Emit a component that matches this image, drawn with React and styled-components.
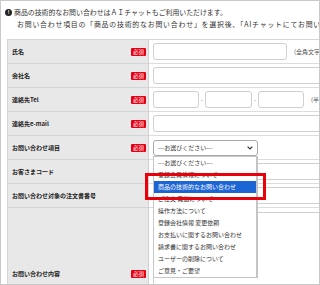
import React from 'react';
import styled, { createGlobalStyle } from 'styled-components';

const GlobalStyle = createGlobalStyle`
  html, body { margin: 0; padding: 0; background: #fff; }
  body { font-family: "Noto Sans CJK JP", "Noto Sans", sans-serif; color: #333; }
  * { box-sizing: border-box; }
`;

const options = [
  '---お選びください---',
  '登録会員情報について',
  '商品の技術的なお問い合わせ',
  'ご注文 発送について',
  '操作方法について',
  '登録会社情報 変更依頼',
  'お支払いに関するお問い合わせ',
  '請求書に関するお問い合わせ',
  'ユーザーの削除について',
  'ご意見・ご要望',
];

const App = () => {
  return (
    <Frame>
      <GlobalStyle />
      <Notice>
        <div className='line'>
          <InfoIcon>!</InfoIcon>
          商品の技術的なお問い合わせはＡＩチャットもご利用いただけます。
        </div>
        <div className='line sub'>
          お問い合わせ項目の「商品の技術的なお問い合わせ」を選択後、「AIチャットにてお問い合わせ」ボタンを押してください。
        </div>
      </Notice>

      <FormTable>
        <Row>
          <Label>氏名<Required>必須</Required></Label>
          <Field>
            <TextInput $w={134} />
            <Note>(全角文字)</Note>
          </Field>
        </Row>
        <Row>
          <Label>会社名<Required>必須</Required></Label>
          <Field>
            <TextInput $w={300} />
          </Field>
        </Row>
        <Row>
          <Label>連絡先Tel<Required>必須</Required></Label>
          <Field>
            <TextInput $w={46} />
            <Dash>-</Dash>
            <TextInput $w={47} />
            <Dash>-</Dash>
            <TextInput $w={46} />
            <Note>(半角数字)</Note>
          </Field>
        </Row>
        <Row>
          <Label>連絡先e-mail<Required>必須</Required></Label>
          <Field>
            <TextInput $w={300} />
          </Field>
        </Row>
        <Row>
          <Label>お問い合わせ項目<Required>必須</Required></Label>
          <Field>
            <SelectWrap>
              <SelectBox>
                <span>---お選びください---</span>
                <svg width="6" height="4" viewBox="0 0 6 4">
                  <path d="M0.6 0.6 L3 3 L5.4 0.6" fill="none" stroke="#333" strokeWidth="1.2" />
                </svg>
              </SelectBox>
              <OptionList>
                {options.map((o, i) => (
                  <OptionItem key={o} $active={i === 2}>{o}</OptionItem>
                ))}
              </OptionList>
              <Highlight />
            </SelectWrap>
          </Field>
        </Row>
        <Row>
          <Label>お客さまコード</Label>
          <Field>
            <TextInput $w={300} />
          </Field>
        </Row>
        <Row>
          <Label>お問い合わせ対象の注文書番号</Label>
          <Field>
            <TextInput $w={300} />
          </Field>
        </Row>
        <Row $tall>
          <Label $bottom>お問い合わせ内容<Required>必須</Required></Label>
          <Field $top>
            <TextArea />
          </Field>
        </Row>
      </FormTable>
    </Frame>
  );
};

const Frame = styled.div`
  width: 320px;
  height: 285px;
  border: 1px solid #c9c9c9;
  overflow: hidden;
  position: relative;
  padding: 5px 0 0 6px;
`;

const Notice = styled.div`
  font-size: 6.9px;
  line-height: 12px;
  color: #333;
  white-space: nowrap;
  height: 33px;
  .line{
    display: flex;
    align-items: center;
  }
  .sub{
    padding-left: 10px;
    font-size: 6.9px;
    letter-spacing: 0.8px;
  }
`;

const InfoIcon = styled.span`
  display: inline-flex;
  align-items: center;
  justify-content: center;
  width: 7px;
  height: 7px;
  border-radius: 50%;
  background: #222;
  color: #fff;
  font-size: 5px;
  font-weight: 700;
  margin: 0 2px 0 -2px;
  font-family: "Liberation Sans", sans-serif;
`;

const FormTable = styled.div`
  width: 420px;
  border-top: 1px solid #d6d6d6;
  border-left: 1px solid #d6d6d6;
`;

const Row = styled.div`
  display: grid;
  grid-template-columns: 141px 1fr;
  height: ${p => p.$tall ? '90px' : '24px'};
`;

const Label = styled.div`
  background: #e8e8e8;
  border-bottom: 1px solid #d4d4d4;
  border-right: 1px solid #d0d0d0;
  display: flex;
  align-items: ${p => p.$bottom ? 'flex-end' : 'center'};
  padding: ${p => p.$bottom ? '0 2px 19px 4px' : '0 2px 0 4px'};
  font-size: 6px;
  font-weight: 700;
  color: #222;
  white-space: nowrap;
`;

const Required = styled.span`
  margin-left: auto;
  background: #e60012;
  color: #fff;
  font-size: 5.5px;
  font-weight: 400;
  line-height: 8px;
  padding: 0 1px;
  width: 15px;
  text-align: center;
  border-radius: 1px;
`;

const Field = styled.div`
  background: #fff;
  border-bottom: 1px solid #dcdcdc;
  display: flex;
  align-items: ${p => p.$top ? 'flex-start' : 'center'};
  padding: ${p => p.$top ? '4px 0 0 4px' : '0 0 0 4px'};
  font-size: 6px;
  color: #555;
  white-space: nowrap;
`;

const TextInput = styled.div`
  width: ${p => p.$w}px;
  flex-shrink: 0;
  height: 17px;
  border: 1px solid #cfcfcf;
  border-radius: 3px;
  background: #fff;
`;

const Note = styled.span`
  margin-left: 7px;
  color: #555;
`;

const Dash = styled.span`
  width: 6px;
  text-align: center;
  color: #777;
`;

const SelectWrap = styled.div`
  position: relative;
`;

const SelectBox = styled.div`
  width: 105px;
  height: 16px;
  border: 1px solid #a9a9a9;
  border-radius: 3px;
  display: flex;
  align-items: center;
  justify-content: space-between;
  padding: 0 4px;
  font-size: 6px;
  color: #333;
`;

const OptionList = styled.div`
  position: absolute;
  top: 16px;
  left: 0;
  width: 105px;
  background: #fff;
  border: 1px solid #c8c8c8;
  border-right: 2px solid #c4c4c4;
  z-index: 2;
`;

const OptionItem = styled.div`
  height: 12px;
  line-height: 12px;
  padding-left: 4px;
  font-size: 6px;
  color: ${p => p.$active ? '#fff' : '#333'};
  background: ${p => p.$active ? '#1c65d4' : 'transparent'};
`;

const Highlight = styled.div`
  position: absolute;
  top: 33px;
  left: -8px;
  width: 121px;
  height: 27px;
  border: 3px solid #e8000b;
  z-index: 3;
`;

const TextArea = styled.div`
  width: 300px;
  height: 80px;
  border: 1px solid #cfcfcf;
  border-radius: 3px;
`;

export default App;
